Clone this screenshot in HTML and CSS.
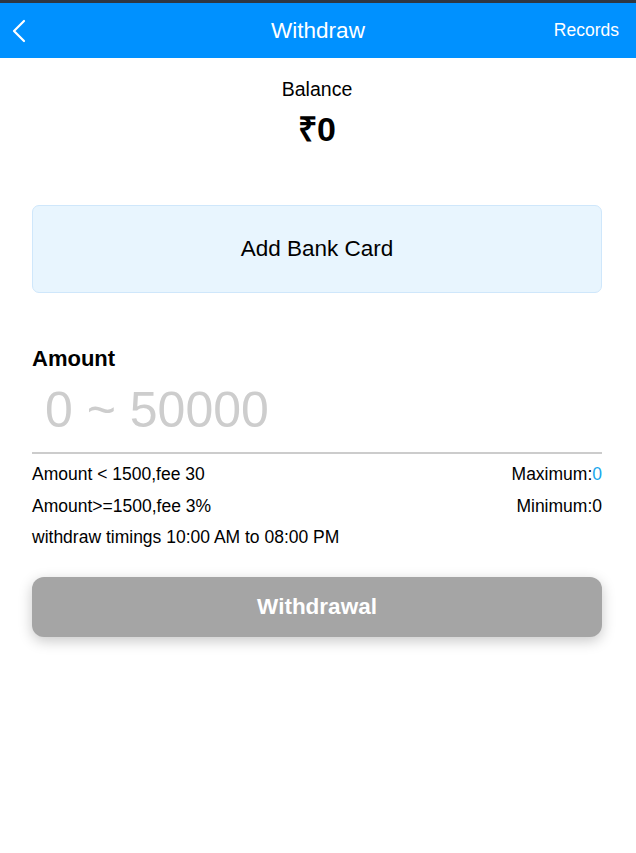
FILE: index.html
```html
<!DOCTYPE html>
<html>
<head>
<meta charset="utf-8">
<link rel="stylesheet" href="styles.css">
</head>
<body>
<div class="topstrip"></div>
<header class="header">
  <span class="back"><svg width="14" height="24" viewBox="0 0 14 24"><path d="M12 2 L2 12 L12 22" fill="none" stroke="#fff" stroke-width="2.2" stroke-linecap="round" stroke-linejoin="round"/></svg></span>
  <h1 class="title">Withdraw</h1>
  <span class="records">Records</span>
</header>
<main class="main">
  <section class="balance">
    <div class="balance-label">Balance</div>
    <div class="balance-value">₹0</div>
  </section>
  <div class="card">Add Bank Card</div>
  <section class="amount">
    <div class="amount-label">Amount</div>
    <div class="amount-input">0 ~ 50000</div>
    <div class="info">
      <div class="row"><span>Amount &lt; 1500,fee 30</span><span>Maximum:<span class="blue">0</span></span></div>
      <div class="row"><span>Amount&gt;=1500,fee 3%</span><span>Minimum:0</span></div>
      <div class="row"><span>withdraw timings 10:00 AM to 08:00 PM</span></div>
    </div>
  </section>
  <button class="btn">Withdrawal</button>
</main>
</body>
</html>
```
FILE: styles.css
```css
* { box-sizing: border-box; }
html, body { margin: 0; padding: 0; background: #fff; }
body { font-family: "Liberation Sans", Arial, sans-serif; color: #000; width: 636px; }
.topstrip { height: 3px; background: #2e3743; }
.header {
  height: 55px; background: #0091ff; color: #fff;
  display: flex; align-items: center; justify-content: space-between;
  padding: 0 17px 0 12px; position: relative;
}
.back { display: flex; align-items: center; width: 60px; }
.title { margin: 0; font-weight: normal; font-size: 22.5px; position: absolute; left: 0; right: 0; text-align: center; pointer-events: none; }
.records { font-size: 17.5px; }
.main { padding: 0 34px 40px 32px; }
.balance { text-align: center; padding-top: 20px; }
.balance-label { font-size: 19.5px; line-height: 22px; }
.balance-value { font-size: 34px; font-weight: bold; line-height: 36px; margin-top: 11px; }
.card {
  margin-top: 58px; height: 88px; background: #e8f5fe; border: 1px solid #cfe7fb;
  border-radius: 7px; display: flex; align-items: center; justify-content: center;
  font-size: 22.5px;
}
.amount { margin-top: 53px; }
.amount-label { font-size: 22px; font-weight: bold; line-height: 26px; }
.amount-input {
  font-size: 50px; color: #cdcdcd; padding-left: 13px; line-height: 56px;
  margin-top: 10px; padding-bottom: 14px; border-bottom: 2px solid #cccccc;
}
.info { margin-top: 5px; font-size: 17.5px; }
.row { display: flex; justify-content: space-between; height: 31.5px; align-items: center; }
.blue { color: #1aa7ec; }
.btn {
  display: block; width: 100%; margin-top: 23px; height: 60px; border: none;
  border-radius: 12px; background: #a5a5a5; color: #fff; font-family: inherit;
  font-size: 22.5px; font-weight: bold; box-shadow: 0 4px 14px rgba(0,0,0,0.22);
}
```
